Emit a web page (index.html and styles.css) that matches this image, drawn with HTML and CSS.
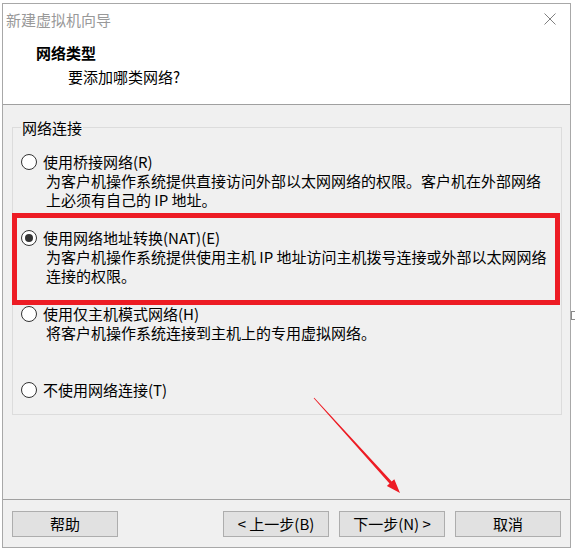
FILE: index.html
```html
<!DOCTYPE html>
<html lang="zh-CN">
<head>
<meta charset="utf-8">
<title>新建虚拟机向导</title>
<link rel="stylesheet" href="styles.css">
</head>
<body>
<div class="page">
  <div class="window">
    <div class="titlebar">
      <span class="title">新建虚拟机向导</span>
      <svg class="close" width="12" height="12" viewBox="0 0 12 12"><path d="M0.5 0.5L11.5 11.5M11.5 0.5L0.5 11.5" stroke="#808080" stroke-width="1" fill="none"/></svg>
    </div>
    <div class="header">
      <div class="h-title">网络类型</div>
      <div class="h-sub">要添加哪类网络?</div>
    </div>
    <div class="main">
      <fieldset class="group">
        <legend>网络连接</legend>
        <div class="option">
          <div class="row"><span class="radio"></span><span class="label">使用桥接网络(R)</span></div>
          <div class="desc">为客户机操作系统提供直接访问外部以太网网络的权限。客户机在外部网络<br>上必须有自己的 IP 地址。</div>
        </div>
        <div class="option">
          <div class="row"><span class="radio checked"></span><span class="label">使用网络地址转换(NAT)(E)</span></div>
          <div class="desc">为客户机操作系统提供使用主机 IP 地址访问主机拨号连接或外部以太网网络<br>连接的权限。</div>
        </div>
        <div class="option">
          <div class="row"><span class="radio"></span><span class="label">使用仅主机模式网络(H)</span></div>
          <div class="desc">将客户机操作系统连接到主机上的专用虚拟网络。</div>
        </div>
        <div class="option last">
          <div class="row"><span class="radio"></span><span class="label">不使用网络连接(T)</span></div>
        </div>
      </fieldset>
    </div>
    <div class="footer">
      <button class="btn">帮助</button>
      <div class="spacer"></div>
      <button class="btn">&lt; 上一步(B)</button>
      <button class="btn">下一步(N) &gt;</button>
      <button class="btn">取消</button>
    </div>
  </div>
  <div class="highlight"></div>
  <div class="edge-mark"></div>
  <svg class="arrow" width="575" height="551" viewBox="0 0 575 551">
    <polygon points="314.3,397.7 391.7,481.6 394.3,479.2 400,493 386.9,486.0 389.5,483.6 313.7,398.3" fill="#ed1c24"/>
  </svg>
</div>
</body>
</html>
```
FILE: styles.css
```css
html, body {
  margin: 0;
  padding: 0;
  background: #ffffff;
}
body {
  font-family: "Noto Sans CJK SC", "Noto Sans", sans-serif;
  font-size: 15px;
  color: #000;
}
.page {
  position: relative;
  width: 575px;
  height: 551px;
  overflow: hidden;
}
.window {
  margin: 3px 0 0 2px;
  width: 569px;
  height: 545px;
  box-sizing: border-box;
  border: 1px solid #a8a8a8;
  display: flex;
  flex-direction: column;
  background: #f0f0f0;
}
.titlebar {
  height: 30px;
  background: #fff;
  display: flex;
  align-items: center;
  justify-content: space-between;
  padding: 0 14px 0 3px;
}
.title {
  color: #999;
  font-size: 15px;
  line-height: 19px;
}
.close {
  display: block;
}
.header {
  height: 70px;
  background: #fff;
  border-bottom: 1px solid #a0a0a0;
  padding-left: 33px;
  line-height: 19px;
}
.h-title {
  font-weight: bold;
  margin-top: 9px;
}
.h-sub {
  margin-top: 5px;
  padding-left: 32px;
}
.main {
  flex: 1;
  padding-top: 13px;
}
.group {
  margin: 0 8px 0 9px;
  padding: 15px 0 15px 0;
  border: 1px solid #dcdcdc;
  line-height: 19px;
}
.group legend {
  margin-left: 8px;
  padding: 0 1px;
  line-height: 19px;
}
.option {
  margin-bottom: 19px;
}
.option.last {
  margin-bottom: 0;
}
.row {
  display: flex;
  align-items: center;
  height: 19px;
  padding-left: 8px;
}
.radio {
  width: 16px;
  height: 16px;
  box-sizing: border-box;
  border: 1px solid #333;
  border-radius: 50%;
  background: #fff;
  margin-right: 6px;
  display: flex;
  align-items: center;
  justify-content: center;
  flex: none;
}
.radio.checked::after {
  content: "";
  width: 8px;
  height: 8px;
  border-radius: 50%;
  background: #333;
}
.desc {
  padding-left: 33px;
  min-height: 38px;
  white-space: nowrap;
}
.footer {
  border-top: 1px solid #a0a0a0;
  display: flex;
  align-items: flex-start;
  padding: 11px 9px 0 9px;
  box-sizing: border-box;
  height: 48px;
  gap: 10px;
}
.spacer {
  flex: 1;
}
.btn {
  width: 106px;
  height: 26px;
  background: #e1e1e1;
  border: 1px solid #adadad;
  font-family: "Noto Sans CJK SC", "Noto Sans", sans-serif;
  font-size: 15px;
  color: #000;
  padding: 0;
  line-height: 22px;
}
.highlight {
  position: absolute;
  left: 12px;
  top: 213px;
  width: 548px;
  height: 92px;
  box-sizing: border-box;
  border: 5px solid #ed1c24;
}
.edge-mark {
  position: absolute;
  left: 571px;
  top: 311px;
  width: 4px;
  height: 7px;
  border-left: 1px solid #8a8a8a;
  border-top: 1px solid #8a8a8a;
  border-bottom: 1px solid #8a8a8a;
}
.arrow {
  position: absolute;
  left: 0;
  top: 0;
  pointer-events: none;
}
```
